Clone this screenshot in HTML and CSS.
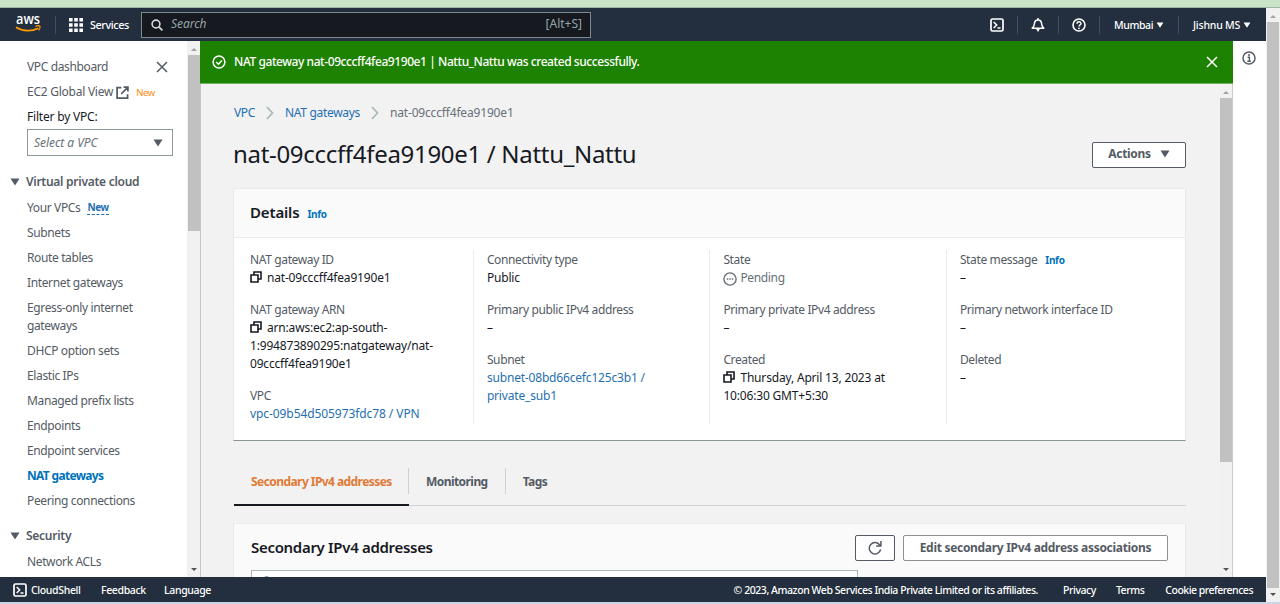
FILE: index.html
```html
<!DOCTYPE html>
<html lang="en">
<head>
<meta charset="utf-8">
<title>NAT gateway details | VPC Console</title>
<link rel="stylesheet" href="styles.css">
</head>
<body>
<svg class="defs" width="0" height="0">
  <symbol id="copy" viewBox="0 0 12 12"><path d="M1 4h7v7H1zM4 4V1h7v7H8" fill="none" stroke="currentColor" stroke-width="1.6"/></symbol>
  <symbol id="shell" viewBox="0 0 14 14"><rect x="1" y="1" width="12" height="12" rx="1.5" fill="none" stroke="currentColor" stroke-width="1.7"/><path d="M3.7 4l3 3-3 3M7.5 10h3" fill="none" stroke="currentColor" stroke-width="1.5"/></symbol>
  <symbol id="close" viewBox="0 0 12 12"><path d="M1 1l10 10M11 1L1 11" fill="none" stroke="currentColor" stroke-width="1.5"/></symbol>
  <symbol id="caret" viewBox="0 0 10 8"><path d="M.5 .5h9L5 7.5z" fill="currentColor"/></symbol>
  <symbol id="chevron" viewBox="0 0 8 14"><path d="M1 1l5.5 6L1 13" fill="none" stroke="currentColor" stroke-width="1.7"/></symbol>
</svg>
<div class="strip-top"></div>
<div class="window">
  <div class="app">
    <header class="topbar">
      <svg class="aws" viewBox="0 -6 28 32"><text x="1" y="9.800" textLength="24" lengthAdjust="spacingAndGlyphs">aws</text><path d="M1 13.200c7 4.500 16 4.500 22 1" fill="none" stroke="#f90" stroke-width="1.700"/><path d="M20.500 12.300c2-.7 4-.7 4.500 0 .3.8-.3 2.600-1.500 4" fill="none" stroke="#f90" stroke-width="1.300"/></svg>
      <i class="sep sep-aws"></i>
      <svg class="grid-icon" viewBox="0 0 14 14"><path d="M0 0h3.600v3.600H0zM5.200 0h3.600v3.600H5.200zM10.400 0H14v3.600h-3.600zM0 5.200h3.600v3.600H0zM5.200 5.200h3.600v3.600H5.200zM10.400 5.200H14v3.600h-3.600zM0 10.400h3.600V14H0zM5.200 10.400h3.600V14H5.200zM10.400 10.400H14V14h-3.600z" fill="#fff"/></svg>
      <span class="services">Services</span>
      <div class="search"><svg viewBox="0 0 12 12"><circle cx="5" cy="5" r="3.900" fill="none" stroke="#d5dbdb" stroke-width="1.600"/><path d="M7.800 7.800l3.600 3.600" stroke="#d5dbdb" stroke-width="1.700"/></svg><em>Search</em><span class="key">[Alt+S]</span></div>
      <div class="tools">
        <svg class="tool"><use href="#shell"/></svg><i class="sep"></i>
        <svg class="tool" viewBox="0 0 14 14"><path d="M1.200 10.200c1.700-1.100 2-2.500 2.200-4.500C3.600 3.100 5 1.900 7 1.900s3.400 1.200 3.600 3.800c.2 2 .5 3.400 2.200 4.500zM7 0v2" fill="none" stroke="#fff" stroke-width="1.500" stroke-linejoin="round"/><path d="M4.800 10.500h4.400L7 14z" fill="#fff"/></svg><i class="sep"></i>
        <svg class="tool" viewBox="0 0 14 14"><circle cx="7" cy="7" r="6" fill="none" stroke="#fff" stroke-width="1.600"/><path d="M5 5.700C5 3.200 9 3.200 9 5.600 9 7 7 6.900 7 8.500" fill="none" stroke="#fff" stroke-width="1.400"/><circle cx="7" cy="10.300" r=".9" fill="#fff"/></svg><i class="sep"></i>
        <span class="menu region">Mumbai</span><svg class="mini"><use href="#caret"/></svg><i class="sep sep-user"></i>
        <span class="menu user">Jishnu MS</span><svg class="mini"><use href="#caret"/></svg>
      </div>
    </header>
    <div class="middle">
      <aside class="sidebar">
        <nav class="nav">
          <div class="row"><span>VPC dashboard</span><svg class="x"><use href="#close"/></svg></div>
          <div class="row"><span class="global">EC2 Global View</span><svg class="ext" viewBox="0 0 12 12"><path d="M5 1.500H1v9.700h9.700V7.500M7 1h4v4M11 1L4.800 7.400" fill="none" stroke="#545b64" stroke-width="1.600"/></svg><small class="orange">New</small></div>
          <div class="row filter">Filter by VPC:</div>
          <div class="select"><em>Select a VPC</em><svg class="caret"><use href="#caret"/></svg></div>
          <div class="group first"><svg class="caret"><use href="#caret"/></svg>Virtual private cloud</div>
          <div class="row">Your VPCs<b class="new">New</b></div>
          <div class="row">Subnets</div>
          <div class="row">Route tables</div>
          <div class="row">Internet gateways</div>
          <div class="row">Egress-only internet<br>gateways</div>
          <div class="row">DHCP option sets</div>
          <div class="row">Elastic IPs</div>
          <div class="row">Managed prefix lists</div>
          <div class="row">Endpoints</div>
          <div class="row">Endpoint services</div>
          <div class="row active">NAT gateways</div>
          <div class="row">Peering connections</div>
          <div class="group second"><svg class="caret"><use href="#caret"/></svg>Security</div>
          <div class="row">Network ACLs</div>
        </nav>
        <div class="scroll"><i class="up"></i><i class="thumb thumb-side"></i><i class="down"></i></div>
      </aside>
      <main class="main">
        <div class="flash"><svg class="ok" viewBox="0 0 14 14"><circle cx="7" cy="7" r="5.900" fill="none" stroke="#fff" stroke-width="1.500"/><path d="M4.200 7l2.200 2.200 3.600-3.800" fill="none" stroke="#fff" stroke-width="1.500"/></svg><span>NAT gateway nat-09cccff4fea9190e1 | Nattu_Nattu was created successfully.</span><svg class="x"><use href="#close"/></svg></div>
        <div class="body">
          <div class="content">
            <div class="crumbs"><a>VPC</a><svg><use href="#chevron"/></svg><a class="crumb-nat">NAT gateways</a><svg><use href="#chevron"/></svg><span class="id">nat-09cccff4fea9190e1</span></div>
            <div class="title"><h1>nat-09cccff4fea9190e1 / Nattu_Nattu</h1><button class="btn actions">Actions<svg class="caret"><use href="#caret"/></svg></button></div>
            <section class="card">
              <div class="card-head"><h2>Details</h2><b class="info">Info</b></div>
              <div class="fields">
                <div class="col">
                  <dl><dt>NAT gateway ID</dt><dd><svg class="copy"><use href="#copy"/></svg>nat-09cccff4fea9190e1</dd></dl>
                  <dl><dt>NAT gateway ARN</dt><dd><svg class="copy"><use href="#copy"/></svg>arn:aws:ec2:ap-south-<br>1:994873890295:natgateway/nat-<br>09cccff4fea9190e1</dd></dl>
                  <dl><dt>VPC</dt><dd><a class="vpc">vpc-09b54d505973fdc78 / VPN</a></dd></dl>
                </div>
                <div class="col">
                  <dl><dt>Connectivity type</dt><dd>Public</dd></dl>
                  <dl><dt>Primary public IPv4 address</dt><dd>–</dd></dl>
                  <dl><dt>Subnet</dt><dd><a>subnet-08bd66cefc125c3b1 /<br>private_sub1</a></dd></dl>
                </div>
                <div class="col">
                  <dl><dt>State</dt><dd class="pending"><svg class="dots" viewBox="0 0 14 14"><circle cx="7" cy="7" r="6.100" fill="none" stroke="#687078" stroke-width="1.400"/><path d="M3.800 7h1.500m1 0h1.500m1 0h1.500" stroke="#687078" stroke-width="1.500"/></svg>Pending</dd></dl>
                  <dl><dt>Primary private IPv4 address</dt><dd>–</dd></dl>
                  <dl><dt>Created</dt><dd><svg class="copy"><use href="#copy"/></svg>Thursday, April 13, 2023 at<br>10:06:30 GMT+5:30</dd></dl>
                </div>
                <div class="col">
                  <dl><dt>State message<b class="info">Info</b></dt><dd>–</dd></dl>
                  <dl><dt>Primary network interface ID</dt><dd>–</dd></dl>
                  <dl><dt>Deleted</dt><dd>–</dd></dl>
                </div>
              </div>
            </section>
            <div class="tabs"><div class="tab on"><span>Secondary IPv4 addresses</span></div><div class="tab"><span>Monitoring</span></div><div class="tab last"><span>Tags</span></div></div>
            <section class="card second-card">
              <div class="tools-row"><h2>Secondary IPv4 addresses</h2><button class="btn refresh"><svg viewBox="0 0 14 14"><path d="M12.600 8.300A5.700 5.700 0 1 1 11.800 4.200M12.900 0v5H8.200" fill="none" stroke="#545b64" stroke-width="1.500"/></svg></button><button class="btn edit">Edit secondary IPv4 address associations</button></div>
              <div class="table-search"><svg viewBox="0 0 12 12"><circle cx="5" cy="5" r="4" fill="none" stroke="#687078" stroke-width="1.500"/></svg></div>
            </section>
          </div>
          <div class="scroll"><i class="up"></i><i class="thumb thumb-main"></i><i class="down"></i></div>
        </div>
      </main>
      <div class="help"><svg viewBox="0 0 14 14"><circle cx="7" cy="7" r="6" fill="none" stroke="#545b64" stroke-width="1.500"/><path d="M5.600 6.200h1.800v4M5.300 10.200h3.600" fill="none" stroke="#545b64" stroke-width="1.400"/><circle cx="7" cy="4.100" r="1" fill="#545b64"/></svg></div>
    </div>
    <footer class="footer"><svg class="fshell"><use href="#shell"/></svg><span class="f-cloud">CloudShell</span><span class="f-feed">Feedback</span><span class="f-lang">Language</span><span class="copyright">© 2023, Amazon Web Services India Private Limited or its affiliates.</span><span class="f-priv">Privacy</span><span class="f-terms">Terms</span><span class="f-cook">Cookie preferences</span></footer>
  </div>
  <div class="scroll page-scroll"><i class="up"></i><i class="thumb thumb-page"></i><i class="down"></i></div>
</div>
<div class="strip-bottom"></div>
</body>
</html>
```
FILE: styles.css
```css
* { box-sizing: border-box; }
body { margin: 0; width: 1280px; height: 604px; overflow: hidden; display: flex; flex-direction: column; background: #fff; color: #16191f; font: 12px/18px "Noto Sans", "Open Sans", sans-serif; letter-spacing: -.37px; white-space: nowrap; }
h1, h2, dl, dd { margin: 0; }
svg { display: block; flex: none; }
.defs { position: absolute; }
i { display: block; flex: none; }
a { color: #1f6fb2; }
.strip-top { height: 8px; flex: none; background: #c8e2c5; border-bottom: 1px solid #9cb5a5; }
.strip-bottom { height: 2px; flex: none; background: #ccd5e5; }
.window { flex: 1; min-height: 0; display: flex; }
.app { width: 1266px; display: flex; flex-direction: column; }
.topbar { height: 33px; flex: none; display: flex; align-items: center; background: #232f3e; color: #fff; font-weight: 500; font-size: 10.5px; letter-spacing: -.4px; padding-left: 15px; }
.aws { width: 28px; height: 32px; margin-top: -1px; }
.aws text { fill: #fff; font: 600 13.5px "Open Sans", sans-serif; letter-spacing: 0; }
.sep { width: 1px; height: 18px; background: #414d5c; }
.sep-aws { margin: 0 13px 0 12px; }
.grid-icon { width: 14px; height: 14px; margin-right: 7px; }
.services { width: 51px; letter-spacing: -.4px; font-size: 10.8px; }
.search { width: 450px; height: 26px; display: flex; align-items: center; background: #16191f; border: 1px solid #7c8a8c; padding: 0 8px 2px 9px; font-weight: 400; font-size: 12px; letter-spacing: -.05px; color: #95a5a6; }
.search svg { width: 12px; height: 12px; margin: 2px 8px 0 0; }
.key { margin-left: auto; letter-spacing: 0; }
.tools { margin-left: auto; display: flex; align-items: center; padding-right: 15px; }
.tool { width: 14px; height: 14px; margin: 0 13px; }
.menu { margin-left: 14px; }
.region { width: 38px; }
.user { width: 46px; letter-spacing: -.2px; }
.mini { width: 8px; height: 6px; margin-left: 4px; }
.sep-user { margin-left: 14px; }
.middle { flex: 1; min-height: 0; display: flex; }
.sidebar { width: 201px; flex: none; display: flex; border-right: 1px solid #c6c6c6; }
.nav { flex: 1; overflow: hidden; padding: 17px 0 0 27px; color: #545b64; }
.row { display: flex; align-items: center; min-height: 18px; margin-bottom: 7px; }
.x { width: 12px; height: 12px; color: #545b64; }
.row .x { margin: 0 19px 0 auto; }
.global { letter-spacing: -.25px; }
.ext { width: 13px; height: 13px; margin: 0 7px 0 3px; }
.orange { color: #ff8a10; font-size: 9.5px; line-height: 14px; padding-top: 2px; letter-spacing: -.4px; }
.filter { color: #16191f; margin-bottom: 3px; letter-spacing: -.2px; }
.select { width: 146px; height: 27px; border: 1px solid #8d9899; display: flex; align-items: center; justify-content: space-between; padding: 0 9px 0 6px; color: #687078; letter-spacing: -.05px; }
.caret { width: 10px; height: 8px; color: #545b64; }
.group { display: flex; align-items: center; margin-left: -17px; gap: 6px; font-weight: 600; letter-spacing: -.27px; }
.first { margin-top: 17px; margin-bottom: 8px; }
.second { margin-top: 17px; margin-bottom: 8px; }
.new { font-size: 10px; line-height: 13px; color: #1f6fb2; margin-left: 7px; border-bottom: 1px dashed #1f6fb2; }
.active { color: #0073bb; font-weight: 700; letter-spacing: -.68px; }
.scroll { width: 13px; flex: none; background: #f1f1f1; display: flex; flex-direction: column; align-items: center; }
.up { border: 3px solid transparent; border-top: 0; border-bottom: 3px solid #a3a3a3; margin: 7px 0 4px; }
.down { border: 3px solid transparent; border-bottom: 0; border-top: 3px solid #505050; margin: auto 0 6px; }
.thumb { width: 12px; background: #c1c1c1; }
.thumb-side { height: 176px; }
.thumb-main { height: 364px; }
.page-scroll { width: 14px; }
.thumb-page { height: 566px; }
.main { width: 1033px; flex: none; display: flex; flex-direction: column; margin-left: -1px; }
.flash { height: 43px; flex: none; background: #1d8102; color: #fff; display: flex; align-items: center; padding: 0 15px 0 12px; font-weight: 500; letter-spacing: -.43px; gap: 8px; border-bottom: 1px solid #76ad67; }
.flash .x { color: #fff; margin-left: auto; }
.ok { width: 14px; height: 14px; }
.body { flex: 1; min-height: 0; display: flex; background: #f2f2f2; margin-left: 1px; border-right: 1px solid #ccc; }
.content { flex: 1; min-width: 0; overflow: hidden; padding: 20px 33px 0 32px; }
.crumbs { display: flex; align-items: center; color: #687078; padding-left: 1px; }
.crumbs svg { width: 8px; height: 14px; color: #aab7b8; margin: 0 11px; }
.crumb-nat { letter-spacing: -.31px; }
.id { letter-spacing: -.17px; }
.title { display: flex; justify-content: space-between; align-items: center; margin-top: 19px; height: 27px; }
h1 { font-size: 24px; font-weight: 400; line-height: 27px; letter-spacing: -.31px; padding-bottom: 2px; }
h2 { font-size: 15px; font-weight: 600; line-height: 20px; letter-spacing: -.31px; }
.btn { display: flex; align-items: center; justify-content: center; background: #fff; border: 1px solid #545b64; border-radius: 2px; color: #545b64; font: 700 12px/16px "Noto Sans", sans-serif; letter-spacing: -.3px; padding: 0; }
.actions { width: 94px; height: 26px; gap: 9px; }
.actions, .edit { padding-bottom: 1px; }
.card { background: #fff; margin-top: 20px; height: 253px; border: 1px solid #e8e8e8; border-bottom: 1px solid #879596; border-top-color: #ececec; }
.card-head { height: 49px; background: #fafafa; border-bottom: 1px solid #eaeded; padding: 2px 0 0 16px; display: flex; align-items: center; }
.card-head h2 { padding-bottom: 4px; letter-spacing: -.15px; }
.info { color: #0073bb; font-size: 10px; margin-left: 8px; letter-spacing: -.3px; }
.fields { display: grid; grid-template-columns: repeat(4, 236.5px); padding: 12px 0 0 2px; }
.col { height: 174px; padding: .5px 0 0 13.4px; display: flex; flex-direction: column; gap: 13.5px; line-height: 18.25px; border-left: 1px solid #eaeded; }
.col:first-child { border-left-color: transparent; padding-left: 13px; }
dt { color: #545b64; }
dd { letter-spacing: -.18px; }
.vpc { letter-spacing: -.08px; }
.copy { display: inline-block; width: 12px; height: 12px; vertical-align: -1px; margin-right: 5px; }
.dots { display: inline-block; width: 14px; height: 14px; vertical-align: -4px; margin-right: 3px; }
.pending { color: #687078; letter-spacing: -.35px; }
.tabs { display: flex; height: 38px; margin-top: 27px; border-bottom: 1px solid #ccd1d1; margin-left: 1px; font-weight: 700; color: #545b64; letter-spacing: -.56px; }
.tab { height: 38px; }
.tab span { display: block; height: 26px; line-height: 28px; padding: 0 17px; border-right: 1px solid #ccd1d1; }
.last span { border: 0; }
.on { width: 175px; color: #e07a35; border-bottom: 2px solid #16191f; }
.second-card { margin-top: 17px; background: #fafafa; }
.tools-row { display: flex; align-items: center; padding: 11px 17px 0 17px; height: 37px; gap: 8px; }
.tools-row h2 { margin-right: auto; padding-bottom: 3px; }
.refresh { width: 40px; height: 26px; }
.refresh svg { width: 14px; height: 14px; }
.edit { width: 265px; height: 26px; border-color: #8d9194; }
.table-search { margin: 9px 0 0 17px; width: 607px; height: 27px; border: 1px solid #aab7b8; background: #fff; padding: 5px 10px; }
.table-search svg { width: 11px; height: 11px; }
.help { width: 33px; flex: none; background: #fff; padding: 10px 0 0 9px; }
.help svg { width: 14px; height: 14px; }
.footer { height: 25px; flex: none; background: #232f3e; color: #fff; display: flex; align-items: center; padding: 0 13px; font-size: 10.5px; font-weight: 500; letter-spacing: -.44px; }
.fshell { width: 14px; height: 14px; margin-right: 4px; }
.f-cloud { width: 70px; }
.f-feed { width: 63px; }
.f-lang, .f-cloud, .f-feed { letter-spacing: -.35px; }
.copyright { margin-left: auto; margin-right: 25px; }
.f-priv { margin-right: 20px; }
.f-terms { margin-right: 21px; }
.f-cook { letter-spacing: -.5px; }
```
